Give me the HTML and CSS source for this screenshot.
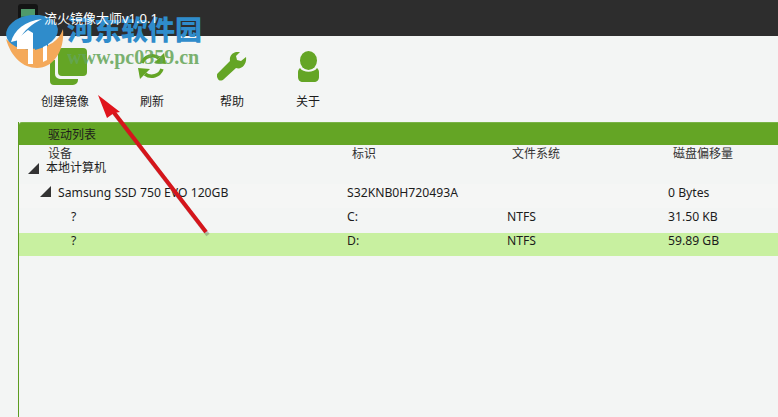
FILE: index.html
```html
<!DOCTYPE html>
<html lang="zh-CN">
<head>
    <meta charset="UTF-8">
    <meta name="viewport" content="width=device-width, initial-scale=1.0">
    <title>流火镜像大师</title>
    <link rel="stylesheet" href="styles.css">
</head>
<body>
    <header class="titlebar">
        <svg class="app-icon" width="20" height="22" viewBox="0 0 20 22">
            <rect x="0" y="0" width="20" height="22" rx="3" fill="#141414"/>
            <rect x="3" y="5" width="14" height="7" fill="#4f9a6a"/>
            <rect x="3" y="12" width="11" height="6" fill="#3c7f60"/>
        </svg>
        <span class="app-title">流火镜像大师v1.0.1</span>
    </header>

    <nav class="toolbar">
        <div class="tool tool-create">
            <svg width="37" height="37" viewBox="0 0 37 37">
                <path d="M0 16a4 4 0 0 1 4-4h1v14a5 5 0 0 0 5 5h18v1a5 5 0 0 1-5 5H4a4 4 0 0 1-4-4z" fill="#64a525"/>
                <rect x="8" y="0" width="29" height="28" rx="4" fill="#64a525"/>
            </svg>
            <span>创建镜像</span>
        </div>
        <div class="tool tool-refresh">
            <svg width="28" height="28" viewBox="0 0 28 28">
                <path d="M4 11A11 11 0 0 1 21 6" fill="none" stroke="#64a525" stroke-width="3.5"/>
                <path d="M16 11l12 1-2-11z" fill="#64a525"/>
                <path d="M24 17A11 11 0 0 1 7 22" fill="none" stroke="#64a525" stroke-width="3.5"/>
                <path d="M12 17L0 16l2 11z" fill="#64a525"/>
            </svg>
            <span>刷新</span>
        </div>
        <div class="tool tool-help">
            <svg width="30" height="29" viewBox="0 0 30 29">
                <path d="M29 5l-5 4-4-1-1-4 4-4c-6-1-11 3-10 9L1 21c-2 2-1 4 0 6s4 2 6 0l12-11c6 2 11-4 10-11z" fill="#64a525"/>
            </svg>
            <span>帮助</span>
        </div>
        <div class="tool tool-about">
            <svg width="21" height="31" viewBox="0 0 21 31">
                <ellipse cx="10.500" cy="9.500" rx="8.500" ry="9.500" fill="#64a525"/>
                <path d="M2 17c3 5 14 5 17 0 1 1 2 2 2 4v5c0 3-2 5-5 5H5c-3 0-5-2-5-5v-5c0-2 1-3 2-4z" fill="#64a525"/>
            </svg>
            <span>关于</span>
        </div>
    </nav>

    <main class="panel">
        <h2 class="panel-title">驱动列表</h2>
        <div class="tree-head">
            <span class="head-device">设备</span>
            <span>标识</span>
            <span>文件系统</span>
            <span>磁盘偏移量</span>
        </div>
        <div class="tree-root"><i class="arrow"></i>本地计算机</div>
        <div class="row row-disk">
            <span class="name"><i class="arrow"></i>Samsung SSD 750 EVO 120GB</span>
            <span>S32KNB0H720493A</span>
            <span></span>
            <span>0 Bytes</span>
        </div>
        <div class="row row-part">
            <span class="name">?</span>
            <span>C:</span>
            <span>NTFS</span>
            <span>31.50 KB</span>
        </div>
        <div class="row row-part row-selected">
            <span class="name">?</span>
            <span>D:</span>
            <span>NTFS</span>
            <span>59.89 GB</span>
        </div>
    </main>

    <!-- 水印和标注 -->
    <svg class="watermark-logo" width="60" height="54" viewBox="0 0 60 54">
        <path d="M1 24C6 42 18 53 32 53 48 53 60 36 58 14 54 26 44 32 30 33 18 34 8 30 1 24z" fill="#f4a95a"/>
        <ellipse cx="27" cy="17" rx="26" ry="17" transform="rotate(-8 27 17)" fill="#2f8ccb"/>
        <path d="M6 27C9 15 20 6 37 4 27 9 19 15 14 25z" fill="#fff"/>
        <path d="M12 33V24l11-9 5 3v16H12z" fill="#fff"/>
        <path d="M30 9h13v22l-13 4z" fill="#2f8ccb"/>
        <path d="M23 34h5v15h-5zM38 32l4-2v15l-4 2z" fill="#fff"/>
    </svg>
    <div class="watermark-text">
        <div class="watermark-cn">河东软件园</div>
        <div class="watermark-url">www.pc0359.cn</div>
    </div>
    <svg class="red-arrow" width="778" height="417" viewBox="0 0 778 417">
        <path d="M207 234L113 112" stroke="#555" stroke-opacity=".35" stroke-width="4" transform="translate(1 1)"/>
        <path d="M206 232L112 110" stroke="#d5151b" stroke-width="4"/>
        <path d="M98 95L120 112 114 113 107 118z" fill="#e0141c"/>
    </svg>
</body>
</html>
```

FILE: styles.css
```css
body {
    margin: 0;
    width: 778px;
    height: 417px;
    overflow: hidden;
    background-color: #f3f5f4;
    color: #1c1c1c;
    font-family: "Noto Sans", "Noto Sans CJK SC", sans-serif;
    font-size: 12px;
}
.titlebar {
    display: flex;
    align-items: center;
    gap: 6px;
    height: 36px;
    padding: 0 0 0 18px;
    box-sizing: border-box;
    background-color: #2d2d2d;
}
.app-icon {
    margin-top: -6px;
}
.app-title {
    position: relative;
    z-index: 2;
    margin-top: -2px;
    color: #fff;
    font-size: 13px;
}
.toolbar {
    display: flex;
    height: 86px;
    box-sizing: border-box;
}
.tool {
    display: flex;
    flex-direction: column;
    align-items: center;
    justify-content: flex-end;
    width: 72px;
    padding-bottom: 12px;
    box-sizing: border-box;
}
.tool-create {
    margin-left: 29px;
}
.tool-create svg {
    margin: 0 0 7px 7px;
}
.tool-refresh {
    margin-left: 15px;
}
.tool-refresh svg {
    margin-bottom: 12px;
}
.tool-help {
    margin-left: 8px;
}
.tool-help svg {
    margin-bottom: 11px;
}
.tool-about {
    margin-left: 4px;
}
.tool-about svg {
    margin-bottom: 10px;
}
.panel {
    margin-left: 18px;
    height: 295px;
    border-left: 1px solid #5d9c20;
}
.panel-title {
    margin: 0;
    height: 23px;
    padding-left: 29px;
    background-color: #64a525;
    border-top: 1px solid #79b347;
    box-sizing: border-box;
    border-top-left-radius: 3px;
    font-size: 12px;
    font-weight: normal;
    line-height: 23px;
}
.tree-head,
.row {
    display: grid;
    grid-template-columns: 328px 160px 161px 1fr;
}
.tree-head {
    height: 15px;
    padding-top: 1px;
    line-height: 15px;
    box-sizing: border-box;
    color: #333;
}
.tree-head span {
    padding-left: 5px;
}
.tree-head .head-device {
    padding-left: 29px;
}
.tree-root {
    display: flex;
    align-items: flex-start;
    height: 24px;
    padding-left: 9px;
    line-height: 16px;
}
.tree-root .arrow {
    margin: 3px 7px 0 0;
}
.row {
    height: 24px;
    line-height: 18px;
    font-size: 12.200px;
}
.row-disk {
    background-color: #f5f6f5;
}
.row-disk .name {
    display: flex;
    padding-left: 21px;
}
.row-disk .arrow {
    margin: 2px 7px 0 0;
}
.row-part .name {
    padding-left: 52px;
}
.row-selected {
    height: 23px;
    margin-top: 1px;
    line-height: 16px;
    background-color: #c8f0a0;
}
.arrow {
    display: inline-block;
    width: 0;
    height: 0;
    border-style: solid;
    border-width: 0 0 11px 11px;
    border-color: transparent transparent #333 transparent;
}
.watermark-logo {
    position: absolute;
    left: 5px;
    top: 15px;
}
.watermark-text {
    position: absolute;
    left: 67px;
    top: 14px;
    font-family: "Liberation Serif", "Noto Sans CJK SC", serif;
    font-weight: bold;
}
.watermark-cn {
    color: #2f8ccb;
    font-size: 27px;
    line-height: 30px;
    font-family: "Noto Sans CJK SC", sans-serif;
    font-weight: 900;
}
.watermark-url {
    margin-top: 3px;
    color: #64a557;
    font-size: 20px;
    line-height: 20px;
    opacity: 0.85;
}
.red-arrow {
    position: absolute;
    left: 0;
    top: 0;
}
```
